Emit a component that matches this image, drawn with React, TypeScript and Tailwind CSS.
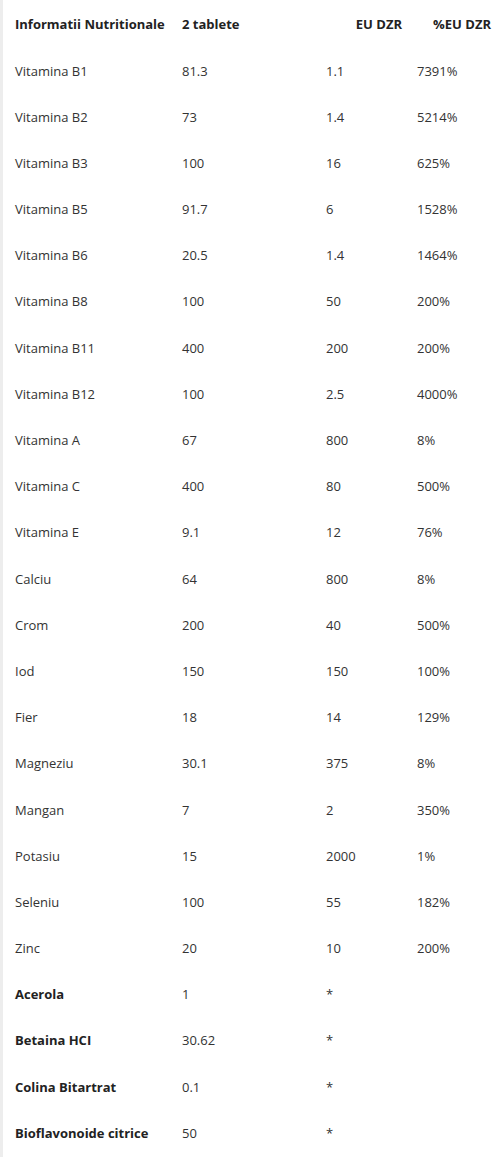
const rows: [string, string, string, string, boolean?][] = [
  ['Vitamina B1', '81.3', '1.1', '7391%'],
  ['Vitamina B2', '73', '1.4', '5214%'],
  ['Vitamina B3', '100', '16', '625%'],
  ['Vitamina B5', '91.7', '6', '1528%'],
  ['Vitamina B6', '20.5', '1.4', '1464%'],
  ['Vitamina B8', '100', '50', '200%'],
  ['Vitamina B11', '400', '200', '200%'],
  ['Vitamina B12', '100', '2.5', '4000%'],
  ['Vitamina A', '67', '800', '8%'],
  ['Vitamina C', '400', '80', '500%'],
  ['Vitamina E', '9.1', '12', '76%'],
  ['Calciu', '64', '800', '8%'],
  ['Crom', '200', '40', '500%'],
  ['Iod', '150', '150', '100%'],
  ['Fier', '18', '14', '129%'],
  ['Magneziu', '30.1', '375', '8%'],
  ['Mangan', '7', '2', '350%'],
  ['Potasiu', '15', '2000', '1%'],
  ['Seleniu', '100', '55', '182%'],
  ['Zinc', '20', '10', '200%'],
  ['Acerola', '1', '*', '', true],
  ['Betaina HCI', '30.62', '*', '', true],
  ['Colina Bitartrat', '0.1', '*', '', true],
  ['Bioflavonoide citrice', '50', '*', '', true],
];

export default function App() {
  return (
    <div
      className="w-[503px] min-h-[1157px] bg-white border-l-[3px] border-[#ededed] pt-[2px] text-[13px] text-[#333]"
      style={{ fontFamily: '"Open Sans", Arial, sans-serif' }}
    >
      <div className="grid grid-cols-[179px_144px_91px_1fr] auto-rows-[46.2px] items-center">
        <div className="pl-[12px] font-bold text-[#222]">Informatii Nutritionale</div>
        <div className="font-bold text-[#222]">2 tablete</div>
        <div className="pr-[15px] text-right font-bold text-[#222]">EU DZR</div>
        <div className="pr-[12px] text-right font-bold text-[#222]">%EU DZR</div>
        {rows.map(([name, dose, dzr, pct, bold]) => (
          <div key={name} className="contents">
            <div className={bold ? 'pl-[12px] font-bold text-[#222]' : 'pl-[12px]'}>{name}</div>
            <div>{dose}</div>
            <div>{dzr}</div>
            <div>{pct}</div>
          </div>
        ))}
      </div>
    </div>
  );
}
